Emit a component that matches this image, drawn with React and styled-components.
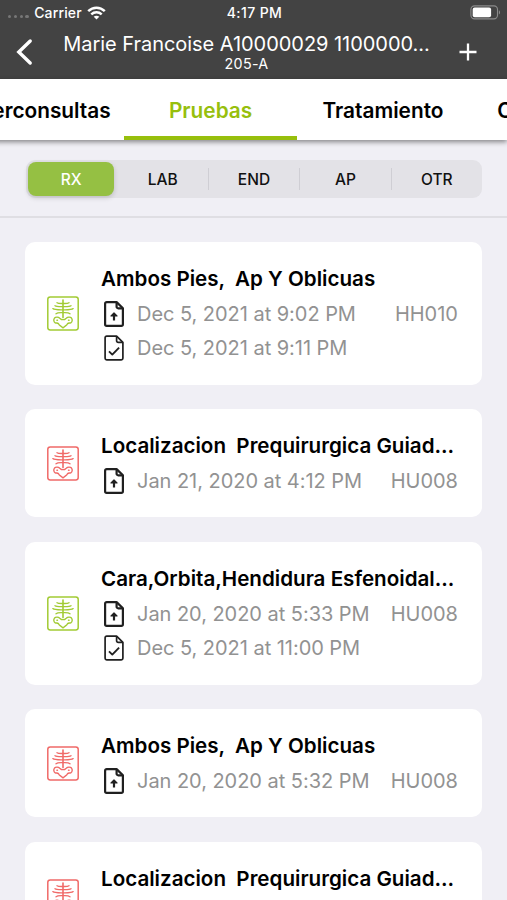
import React, { useState } from 'react';
import styled, { createGlobalStyle } from 'styled-components';

const exams = [
  { id: 1, done: true, name: 'Ambos Pies,  Ap Y Oblicuas', requested: 'Dec 5, 2021 at 9:02 PM', finished: 'Dec 5, 2021 at 9:11 PM', unit: 'HH010' },
  { id: 2, done: false, name: 'Localizacion  Prequirurgica Guiad...', requested: 'Jan 21, 2020 at 4:12 PM', unit: 'HU008' },
  { id: 3, done: true, name: 'Cara,Orbita,Hendidura Esfenoidal...', requested: 'Jan 20, 2020 at 5:33 PM', finished: 'Dec 5, 2021 at 11:00 PM', unit: 'HU008' },
  { id: 4, done: false, name: 'Ambos Pies,  Ap Y Oblicuas', requested: 'Jan 20, 2020 at 5:32 PM', unit: 'HU008' },
  { id: 5, done: false, name: 'Localizacion  Prequirurgica Guiad...' },
];

const tabs = ['Interconsultas', 'Pruebas', 'Tratamiento', 'C'];
const filters = ['RX', 'LAB', 'END', 'AP', 'OTR'];

const WifiIcon = () => (
  <svg width="19" height="14" viewBox="0 0 19 14" fill="none" stroke="#fff" strokeWidth="2.5">
    <path d="M1.2 5.2C6 .6 13 .6 17.8 5.2" />
    <path d="M4.3 8.4c3-2.8 7.4-2.8 10.4 0" />
    <path d="M9.5 13.4 6.7 10.7c1.6-1.4 4-1.4 5.6 0z" fill="#fff" stroke="none" />
  </svg>
);

const BatteryIcon = () => (
  <svg width="31" height="15" viewBox="0 0 31 15" fill="none">
    <rect x=".9" y=".9" width="26.6" height="13" rx="3.6" stroke="#8b8b8b" strokeWidth="1.1" />
    <rect x="2.7" y="2.6" width="18.4" height="9.6" rx="2" fill="#fff" />
    <path d="M28.9 5.2c1.5.6 1.5 3.8 0 4.4z" fill="#8b8b8b" />
  </svg>
);

const BackIcon = () => (
  <svg width="18" height="28" viewBox="0 0 18 28" fill="none" stroke="#fff" strokeWidth="3.4" strokeLinecap="round">
    <path d="M15.2 3 3.8 14l11.4 11" />
  </svg>
);

const PlusIcon = () => (
  <svg width="18" height="18" viewBox="0 0 18 18" stroke="#fff" strokeWidth="2.3">
    <path d="M9 .5v17M.5 9h17" />
  </svg>
);

const XRayIcon = () => (
  <svg width="32" height="35" viewBox="0 0 32 35" fill="none" stroke="currentColor" strokeWidth="1.3" strokeLinecap="round" strokeLinejoin="round">
    <rect x=".8" y=".9" width="30.4" height="33" rx="2.4" strokeWidth="1.5" />
    <path d="M16 4v17.600" strokeWidth="1.6" />
    <path d="M10 6.700c1.300 1 3.600.8 6 .8s4.700.2 6-.8" />
    <path d="M8 9.700c1.500 1.100 4.600.9 8 .9s6.500.2 8-.9" />
    <path d="M5.800 12.600c1.700 1.500 5.800 1.300 10.200 1.300s8.500.2 10.200-1.300" />
    <path d="M9 17.700c1.500-1.300 4.500-1 7-1s5.500-.3 7 1" />
    <path d="M12.800 22.300c-1.400-1.200-4-1.400-5.300-.2-1.200 1.500-.8 4 .7 4.800 1.200.4 2.500-.2 3.300.8.500 1.200 1.500 1.800 2.500 2.600l2 1.600 2-1.600c1-.8 2-1.400 2.500-2.600.8-1 2.100-.4 3.300-.8 1.500-.8 1.900-3.300.7-4.800-1.300-1.200-3.900-1-5.300.2l-1.700 1.300h-3z" strokeWidth="1.400" />
    <path d="M10 24.300h.4M21.600 24.300h.4" strokeWidth="1.600" />
  </svg>
);

const FileIcon = ({ bold, children }) => (
  <svg width="20" height="26" viewBox="0 0 20 26" fill="none" stroke="#202020" strokeWidth={bold ? 2.2 : 1.7} strokeLinejoin="round">
    <path d="M12.600 1.100H2.700A1.600 1.600 0 0 0 1.100 2.700v20.600A1.600 1.600 0 0 0 2.700 24.900h14.600a1.600 1.600 0 0 0 1.600-1.600V7.300z" />
    <path d="M12.600 1.100v4.600a1.600 1.600 0 0 0 1.600 1.600H19" />
    {children}
  </svg>
);

const App = () => {
  const [tab, setTab] = useState('Pruebas');
  const [filter, setFilter] = useState('RX');

  return (
    <Screen>
      <GlobalStyle />
      <Header>
        <StatusBar>
          <Carrier>
            <Signal><i /><i /><i /><i /></Signal>
            Carrier
            <WifiIcon />
          </Carrier>
          <Clock>4:17 PM</Clock>
          <Battery><BatteryIcon /></Battery>
        </StatusBar>
        <NavBar>
          <NavButton aria-label="Volver"><BackIcon /></NavButton>
          <Patient>
            <PatientName>Marie Francoise A10000029 1100000...</PatientName>
            <Room>205-A</Room>
          </Patient>
          <NavButton aria-label="Agregar"><PlusIcon /></NavButton>
        </NavBar>
      </Header>
      <Tabs>
        {tabs.map(name => (
          <Tab key={name} $active={tab === name} $cut={name === 'C'} onClick={() => setTab(name)}>
            {name}
          </Tab>
        ))}
      </Tabs>
      <FilterBar>
        <Segments>
          {filters.map(name => (
            <Segment key={name} $active={filter === name} onClick={() => setFilter(name)}>
              {name}
            </Segment>
          ))}
        </Segments>
      </FilterBar>
      <ExamList>
        {exams.map(exam => (
          <ExamCard key={exam.id}>
            <ExamStatus $done={exam.done}><XRayIcon /></ExamStatus>
            <ExamDetails>
              <ExamName>{exam.name}</ExamName>
              <ExamRow>
                <FileIcon bold>
                  <path d="M10 19.500v-6" />
                  <path d="m7 15 3-3 3 3z" fill="#202020" strokeWidth="1.200" />
                </FileIcon>
                <ExamDate>{exam.requested}</ExamDate>
                <Unit>{exam.unit}</Unit>
              </ExamRow>
              {exam.finished && (
                <ExamRow>
                  <FileIcon>
                    <path d="m5 16.400 3.300 3.200 6.800-7" strokeWidth="1.900" />
                  </FileIcon>
                  <ExamDate>{exam.finished}</ExamDate>
                </ExamRow>
              )}
            </ExamDetails>
          </ExamCard>
        ))}
      </ExamList>
    </Screen>
  );
};

export default App;

const GlobalStyle = createGlobalStyle`
  * {
    box-sizing: border-box;
  }
  body {
    margin: 0;
    font-family: Inter, "Liberation Sans", sans-serif;
  }
  button {
    border: none;
    padding: 0;
    background: none;
    font-family: inherit;
  }
  svg {
    display: block;
    flex-shrink: 0;
  }
`;

const Screen = styled.div`
  width: 507px;
  height: 900px;
  overflow: hidden;
  display: flex;
  flex-direction: column;
  background: #f0eff5;
`;

const Header = styled.header`
  height: 79px;
  flex-shrink: 0;
  background: #434343;
  color: #fff;
`;

const StatusBar = styled.div`
  height: 26px;
  padding: 0 6px 1px 8px;
  display: grid;
  grid-template-columns: 1fr auto 1fr;
  align-items: center;
  font-size: 14px;
  font-weight: 500;
`;

const Carrier = styled.div`
  display: flex;
  align-items: center;
  gap: 5.500px;
  letter-spacing: 0.15px;
`;

const Signal = styled.span`
  display: flex;
  gap: 2.500px;
  padding-top: 8px;
  i {
    width: 3.300px;
    height: 3.300px;
    border-radius: 50%;
    background: #777;
  }
`;

const Clock = styled.span`
  letter-spacing: 0.4px;
`;

const Battery = styled.div`
  display: flex;
  justify-content: flex-end;
`;

const NavBar = styled.div`
  height: 52px;
  padding: 0 30px 0 15px;
  display: flex;
  align-items: center;
`;

const NavButton = styled.button`
  display: flex;
`;

const Patient = styled.div`
  flex: 1;
  height: 50px;
  padding: 5px 0 0 1px;
  display: flex;
  flex-direction: column;
  align-items: center;
  white-space: nowrap;
`;

const PatientName = styled.div`
  font-size: 20px;
  line-height: 25px;
  letter-spacing: -0.040px;
`;

const Room = styled.div`
  font-size: 14.300px;
  line-height: 14px;
  letter-spacing: 0.300px;
`;

const Tabs = styled.nav`
  height: 61px;
  flex-shrink: 0;
  display: flex;
  margin-left: -48px;
  background: #fff;
  position: relative;
  box-shadow: 0 2px 5px rgba(0, 0, 0, 0.45);
`;

const Tab = styled.button`
  width: 172.400px;
  flex-shrink: 0;
  padding-top: 5px;
  padding-left: ${({ $cut }) => ($cut ? '28px' : '0')};
  text-align: ${({ $cut }) => ($cut ? 'left' : 'center')};
  border-bottom: 4px solid ${({ $active }) => ($active ? '#97bf0d' : 'transparent')};
  color: ${({ $active }) => ($active ? '#97bf0d' : '#000')};
  font-size: 20.800px;
  font-weight: 600;

  &:first-child {
    padding-left: 1px;
  }
`;

const FilterBar = styled.div`
  height: 78px;
  flex-shrink: 0;
  padding: 20px 25px 0 26px;
  border-bottom: 2px solid #dfdee3;
`;

const Segments = styled.div`
  height: 38px;
  padding: 2px;
  display: grid;
  grid-template-columns: repeat(5, 1fr);
  gap: 5px;
  border-radius: 9px;
  background: #e3e2e7;
`;

const Segment = styled.button`
  position: relative;
  border-radius: 8px;
  background: ${({ $active }) => ($active ? '#95c043' : 'transparent')};
  color: ${({ $active }) => ($active ? '#fff' : '#111')};
  box-shadow: ${({ $active }) => ($active ? '0 2px 5px rgba(0, 0, 0, 0.16)' : 'none')};
  font-size: 15.500px;
  font-weight: 500;

  & + &:not(:nth-child(2))::before {
    content: '';
    position: absolute;
    left: -3px;
    top: 6px;
    bottom: 6px;
    width: 1px;
    background: #cfced4;
  }
`;

const ExamList = styled.main`
  padding: 24px 25px 0;
  display: flex;
  flex-direction: column;
  gap: 24.600px;
`;

const ExamCard = styled.article`
  padding: 20px 24px 19px 22px;
  flex-shrink: 0;
  display: flex;
  align-items: center;
  border-radius: 10px;
  background: #fff;
`;

const ExamStatus = styled.div`
  width: 54px;
  color: ${({ $done }) => ($done ? '#a2cb34' : '#f06a68')};
`;

const ExamDetails = styled.div`
  flex: 1;
`;

const ExamName = styled.h2`
  margin: 0;
  font-size: 20.600px;
  line-height: 34.500px;
  font-weight: 600;
  white-space: pre;
`;

const ExamRow = styled.div`
  height: 34.600px;
  padding-left: 3px;
  display: flex;
  align-items: center;
  color: #929292;
  font-size: 20px;
  white-space: nowrap;
`;

const ExamDate = styled.span`
  margin-left: 13px;
  letter-spacing: -0.040px;
`;

const Unit = styled.span`
  margin-left: auto;
`;
